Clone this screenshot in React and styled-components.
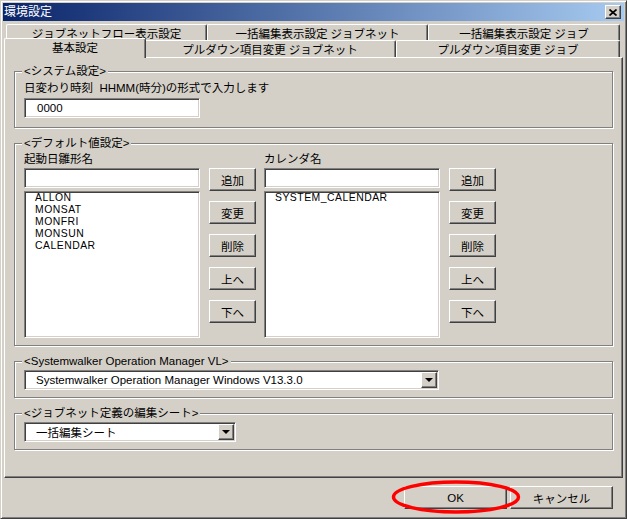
import React from 'react'
import styled, { createGlobalStyle, css } from 'styled-components'

const GlobalStyle = createGlobalStyle`
  html, body {
    margin: 0;
    padding: 0;
    background: #d4d0c8;
  }
  body {
    font-family: "Liberation Sans", "Noto Sans CJK JP", sans-serif;
    font-size: 11.5px;
    color: #000;
  }
`

const raised = css`
  border-top: 1px solid #fff;
  border-left: 1px solid #fff;
  border-right: 1px solid #404040;
  border-bottom: 1px solid #404040;
  box-shadow: inset -1px -1px 0 #808080;
`

const sunken = css`
  border-top: 1px solid #808080;
  border-left: 1px solid #808080;
  border-right: 1px solid #fff;
  border-bottom: 1px solid #fff;
  box-shadow: inset 1px 1px 0 #404040, inset -1px -1px 0 #d4d0c8;
`

const Window = styled.div`
  box-sizing: border-box;
  width: 627px;
  height: 519px;
  background: #d4d0c8;
  border-top: 1px solid #d4d0c8;
  border-left: 1px solid #d4d0c8;
  border-right: 1px solid #404040;
  border-bottom: 1px solid #404040;
  box-shadow: inset 1px 1px 0 #fff, inset -1px -1px 0 #808080;
  padding: 2px 3px 3px;
  display: flex;
  flex-direction: column;
`

const TitleBar = styled.div`
  height: 18px;
  margin: 0 -1px;
  padding: 0 3px 0 1px;
  background: linear-gradient(to right, #0a246a, #a6caf0);
  color: #fff;
  font-size: 12px;
  display: flex;
  align-items: center;
  justify-content: space-between;
  line-height: 18px;
`

const CloseBox = styled.div`
  box-sizing: border-box;
  width: 16px;
  height: 14px;
  background: #d4d0c8;
  ${raised}
  display: flex;
  align-items: center;
  justify-content: center;
`

const TabRow = styled.div`
  display: flex;
  padding-left: 2px;
  height: ${p => p.$h}px;
  margin-top: ${p => p.$mt || 0}px;
`

const Tab = styled.div`
  box-sizing: border-box;
  width: ${p => p.$w}px;
  height: ${p => p.$h}px;
  border-top: 1px solid #fff;
  border-left: 1px solid #fff;
  border-right: 1px solid #404040;
  box-shadow: inset -1px 0 0 #808080;
  border-radius: 2px 2px 0 0;
  background: #d4d0c8;
  display: flex;
  align-items: center;
  justify-content: center;
  white-space: nowrap;
  ${p => p.$active && css`
    width: ${p.$w + 4}px;
    height: ${p.$h + 3}px;
    margin: -2px -2px -1px;
    padding-bottom: 3px;
    position: relative;
    z-index: 1;
  `}
`

const Panel = styled.div`
  box-sizing: border-box;
  height: 421px;
  border-top: 1px solid #fff;
  border-left: 1px solid #fff;
  border-right: 1px solid #404040;
  border-bottom: 1px solid #404040;
  box-shadow: inset -1px -1px 0 #808080;
  padding: 13px 9px 0;
  display: flex;
  flex-direction: column;
  gap: 15px;
`

const Group = styled.div`
  border: 1px solid #808080;
  box-shadow: inset 1px 1px 0 #fff, 1px 1px 0 #fff;
  padding: 0 9px ${p => p.$pb}px;
  display: flex;
  flex-direction: column;
  align-items: flex-start;
`

const Legend = styled.div`
  margin: -8px 0 0 -2px;
  padding: 0 2px;
  height: 14px;
  line-height: 14px;
  background: #d4d0c8;
  white-space: nowrap;
`

const Label = styled.div`
  margin-top: ${p => p.$mt}px;
  height: 14px;
  line-height: 14px;
  white-space: nowrap;
`

const TextBox = styled.div`
  box-sizing: border-box;
  width: 176px;
  height: 20px;
  margin-top: ${p => p.$mt}px;
  background: #fff;
  ${sunken}
  padding-left: 12px;
  line-height: 18px;
`

const ListBox = styled.div`
  box-sizing: border-box;
  width: 176px;
  height: 147px;
  margin-top: 3px;
  background: #fff;
  ${sunken}
  padding: 0 0 0 10px;
  font-size: 10.4px;
  letter-spacing: 0.5px;
  line-height: 12px;
`

const Pickers = styled.div`
  display: flex;
  gap: 8px;
`

const Picker = styled.div`
  display: flex;
  flex-direction: column;
`

const PickerBody = styled.div`
  display: flex;
  gap: 9px;
  margin-top: 2px;
`

const ButtonColumn = styled.div`
  display: flex;
  flex-direction: column;
  gap: 10px;
`

const Button = styled.button`
  box-sizing: border-box;
  width: ${p => p.$w}px;
  height: 23px;
  padding: 0;
  font: inherit;
  color: #000;
  background: #d4d0c8;
  ${raised}
  border-radius: 0;
`

const Combo = styled.div`
  box-sizing: border-box;
  width: ${p => p.$w}px;
  height: 20px;
  margin-top: 2px;
  background: #fff;
  ${sunken}
  padding: 1px 1px 1px 11px;
  display: flex;
  align-items: center;
  justify-content: space-between;
  white-space: nowrap;
`

const DropButton = styled.div`
  box-sizing: border-box;
  width: 16px;
  height: 16px;
  background: #d4d0c8;
  ${raised}
  display: flex;
  align-items: center;
  justify-content: center;
`

const Arrow = styled.div`
  width: 0;
  height: 0;
  border-left: 4px solid transparent;
  border-right: 4px solid transparent;
  border-top: 4px solid #000;
`

const Footer = styled.div`
  display: flex;
  justify-content: flex-end;
  gap: 3px;
  margin-top: 8px;
  padding-right: 10px;
`

const Marked = styled.div`
  position: relative;
  display: flex;
`

const Ring = styled.svg`
  position: absolute;
  left: 50%;
  top: 50%;
  transform: translate(-50%, -50%);
  margin-top: -1px;
  overflow: visible;
  pointer-events: none;
`

const topTabs = [
  { label: 'ジョブネットフロー表示設定', w: 201 },
  { label: '一括編集表示設定 ジョブネット', w: 221 },
  { label: '一括編集表示設定 ジョブ', w: 192 },
]

const bottomTabs = [
  { label: '基本設定', w: 138, active: true },
  { label: 'プルダウン項目変更 ジョブネット', w: 252 },
  { label: 'プルダウン項目変更 ジョブ', w: 224 },
]

const pickers = [
  { label: '起動日雛形名', items: ['ALLON', 'MONSAT', 'MONFRI', 'MONSUN', 'CALENDAR'] },
  { label: 'カレンダ名', items: ['SYSTEM_CALENDAR'] },
]

const actions = ['追加', '変更', '削除', '上へ', '下へ']

export default function App() {
  return (
    <>
      <GlobalStyle />
      <Window>
        <TitleBar>
          <span>環境設定</span>
          <CloseBox>
            <svg width="8" height="7" viewBox="0 0 8 7">
              <path d="M0.5 0.5 L7.5 6.5 M7.5 0.5 L0.5 6.5" stroke="#000" strokeWidth="1.7" />
            </svg>
          </CloseBox>
        </TitleBar>

        <TabRow $h={16} $mt={3}>
          {topTabs.map(t => (
            <Tab key={t.label} $w={t.w} $h={16}>{t.label}</Tab>
          ))}
        </TabRow>
        <TabRow $h={17}>
          {bottomTabs.map(t => (
            <Tab key={t.label} $w={t.w} $h={17} $active={t.active}>{t.label}</Tab>
          ))}
        </TabRow>

        <Panel>
          <Group $pb={9}>
            <Legend>&lt;システム設定&gt;</Legend>
            <Label $mt={3}>日変わり時刻&nbsp; HHMM(時分)の形式で入力します</Label>
            <TextBox $mt={3}>0000</TextBox>
          </Group>

          <Group $pb={7}>
            <Legend>&lt;デフォルト値設定&gt;</Legend>
            <Pickers>
              {pickers.map(p => (
                <Picker key={p.label}>
                  <Label $mt={2}>{p.label}</Label>
                  <PickerBody>
                    <div>
                      <TextBox $mt={0} />
                      <ListBox>
                        {p.items.map(i => <div key={i}>{i}</div>)}
                      </ListBox>
                    </div>
                    <ButtonColumn>
                      {actions.map(a => <Button key={a} $w={47}>{a}</Button>)}
                    </ButtonColumn>
                  </PickerBody>
                </Picker>
              ))}
            </Pickers>
          </Group>

          <Group $pb={7}>
            <Legend>&lt;Systemwalker Operation Manager VL&gt;</Legend>
            <Combo $w={415}>
              <span>Systemwalker Operation Manager Windows V13.3.0</span>
              <DropButton><Arrow /></DropButton>
            </Combo>
          </Group>

          <Group $pb={7}>
            <Legend>&lt;ジョブネット定義の編集シート&gt;</Legend>
            <Combo $w={212}>
              <span>一括編集シート</span>
              <DropButton><Arrow /></DropButton>
            </Combo>
          </Group>
        </Panel>

        <Footer>
          <Marked>
            <Button $w={103}>OK</Button>
            <Ring width="128" height="33" viewBox="0 0 128 33">
              <ellipse cx="64" cy="16.5" rx="62.5" ry="15" fill="none" stroke="#f00" strokeWidth="3.5" />
            </Ring>
          </Marked>
          <Button $w={103}>キャンセル</Button>
        </Footer>
      </Window>
    </>
  )
}
